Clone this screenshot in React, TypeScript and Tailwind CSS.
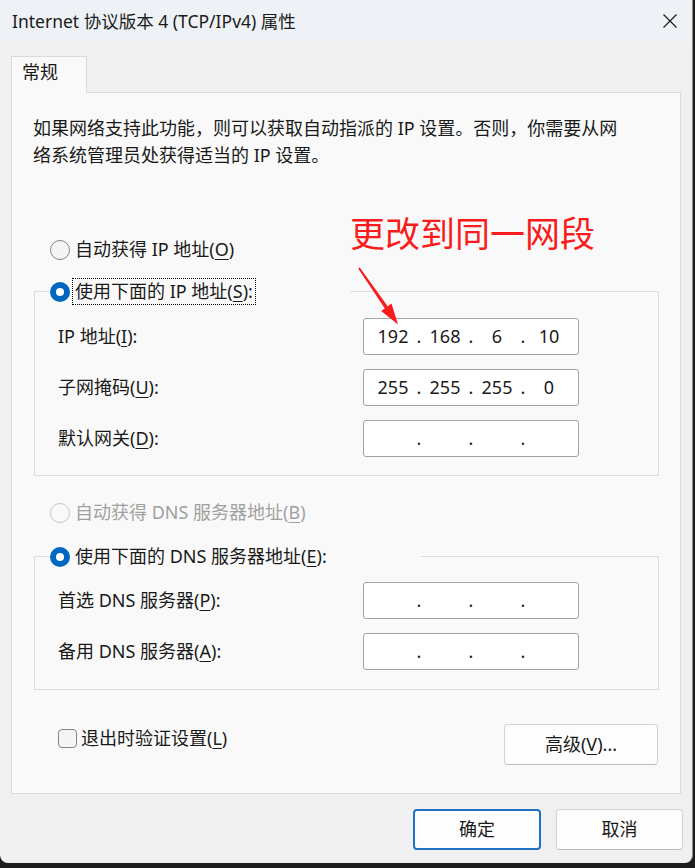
import { Fragment } from "react"

const font = "font-['Noto_Sans','Noto_Sans_CJK_SC',sans-serif]"

function Key({ k }: { k: string }) {
  return <span className="underline underline-offset-[3px] decoration-1">{k}</span>
}

function Radio({ checked, disabled }: { checked?: boolean; disabled?: boolean }) {
  if (checked) {
    return (
      <span className="flex h-[20px] w-[20px] shrink-0 items-center justify-center rounded-full bg-[#0067c0]">
        <span className="h-[8px] w-[8px] rounded-full bg-white" />
      </span>
    )
  }
  return (
    <span
      className={`h-[20px] w-[20px] shrink-0 rounded-full border ${
        disabled ? "border-[#c6c6c6] bg-[#f9f9f9]" : "border-[#858585] bg-[#f5f5f5]"
      }`}
    />
  )
}

function IpBox({ parts }: { parts: string[] }) {
  return (
    <div className="flex h-[37px] w-[216px] items-center rounded-[3px] border border-[#a3a3a3] bg-white pl-[7px] text-[18px] leading-[27px] text-[#1a1a1a]">
      {parts.map((p, i) => (
        <Fragment key={i}>
          {i > 0 && <span className="w-[8px] text-center">.</span>}
          <span className="w-[44px] text-center">{p}</span>
        </Fragment>
      ))}
    </div>
  )
}

function Field({ label, parts }: { label: React.ReactNode; parts: string[] }) {
  return (
    <div className="flex items-center px-[23px]">
      <span className="w-[305px] leading-[27px]">{label}</span>
      <IpBox parts={parts} />
    </div>
  )
}

function Button({ children, primary, className = "" }: { children: React.ReactNode; primary?: boolean; className?: string }) {
  return (
    <button
      className={`flex h-[41px] items-center justify-center rounded-[4px] bg-[#fdfdfd] text-[18px] text-[#1a1a1a] ${
        primary ? "border-2 border-[#1f6fc5]" : "border border-[#d2d2d2] border-b-[#bdbdbd]"
      } ${className}`}
    >
      {children}
    </button>
  )
}

export default function App() {
  const empty = ["", "", "", ""]

  return (
    <div className={`relative h-[868px] w-[695px] overflow-hidden bg-[#1d1d1d] ${font}`}>
      <div className="flex h-[863px] w-[693px] flex-col overflow-hidden rounded-b-[8px] border-r border-[#8d8d8d] bg-[#f0f0f0] text-[18px] text-[#1a1a1a]">
        {/* title bar */}
        <div className="flex h-[42px] shrink-0 items-center bg-[#eef2f6] pl-[12px] pr-[14px]">
          <span className="text-[17.5px] leading-[27px] text-[#1a1a1a]">Internet 协议版本 4 (TCP/IPv4) 属性</span>
          <svg className="ml-auto" width="16" height="16" viewBox="0 0 16 16">
            <path d="M1.5 1.5 L14.5 14.5 M14.5 1.5 L1.5 14.5" stroke="#1a1a1a" strokeWidth="1.2" fill="none" />
          </svg>
        </div>

        <div className="flex flex-col px-[11px] pt-[14px]">
          {/* tab */}
          <div className="relative z-10 h-[37px] w-[76px] border border-b-0 border-[#dadada] bg-[#f9f9f9] pl-[10px] pt-[2px] leading-[27px]">
            常规
          </div>

          {/* panel */}
          <div className="-mt-px flex h-[702px] w-[670px] flex-col border border-[#dadada] bg-[#f9f9f9]">
            <p className="mt-[22px] pl-[21px] leading-[27px] whitespace-nowrap">
              如果网络支持此功能，则可以获取自动指派的 IP 设置。否则，你需要从网
              <br />
              络系统管理员处获得适当的 IP 设置。
            </p>

            <div className="mt-[67px] ml-[38px] flex h-[27px] items-center">
              <Radio />
              <span className="ml-[5px] leading-[27px]">
                自动获得 IP 地址(<Key k="O" />)
              </span>
            </div>

            <fieldset className="mt-[15px] ml-[22px] w-[625px] border border-[#dcdcdc] pb-[18px]">
              <legend className="ml-[15px] w-[300px]">
                <div className="flex h-[27px] items-center">
                  <Radio checked />
                  <span className="ml-[2px] h-[27px] border border-dotted border-black pr-[2px] pl-[2px] leading-[25px]">
                    使用下面的 IP 地址(<Key k="S" />):
                  </span>
                </div>
              </legend>
              <div className="mt-[13px] flex flex-col gap-[14px]">
                <Field label={<>IP 地址(<Key k="I" />):</>} parts={["192", "168", "6", "10"]} />
                <Field label={<>子网掩码(<Key k="U" />):</>} parts={["255", "255", "255", "0"]} />
                <Field label={<>默认网关(<Key k="D" />):</>} parts={empty} />
              </div>
            </fieldset>

            <div className="mt-[23px] ml-[38px] flex h-[27px] items-center">
              <Radio disabled />
              <span className="ml-[5px] leading-[27px] text-[#a0a0a0]">
                自动获得 DNS 服务器地址(<Key k="B" />)
              </span>
            </div>

            <fieldset className="mt-[17px] ml-[22px] w-[625px] border border-[#dcdcdc] pb-[19px]">
              <legend className="ml-[15px] w-[371px]">
                <div className="flex h-[27px] items-center">
                  <Radio checked />
                  <span className="ml-[5px] leading-[27px]">
                    使用下面的 DNS 服务器地址(<Key k="E" />):
                  </span>
                </div>
              </legend>
              <div className="mt-[12px] flex flex-col gap-[14px]">
                <Field label={<>首选 DNS 服务器(<Key k="P" />):</>} parts={empty} />
                <Field label={<>备用 DNS 服务器(<Key k="A" />):</>} parts={empty} />
              </div>
            </fieldset>

            <div className="mt-[34px] flex items-start pr-[22px] pl-[46px]">
              <div className="mt-px flex h-[27px] items-center">
                <span className="h-[19px] w-[19px] rounded-[4px] border border-[#858585] bg-[#f5f5f5]" />
                <span className="ml-[4px] leading-[27px]">
                  退出时验证设置(<Key k="L" />)
                </span>
              </div>
              <Button className="ml-auto w-[154px]">
                高级(<Key k="V" />)...
              </Button>
            </div>
          </div>
        </div>

        <div className="mt-[15px] flex justify-end gap-[15px] pr-[9px]">
          <Button primary className="w-[128px]">确定</Button>
          <Button className="w-[127px]">取消</Button>
        </div>
      </div>

      {/* red annotation */}
      <div className="absolute top-[214px] left-[350px] text-[35px] leading-none whitespace-nowrap text-[#f81c1c] font-['Noto_Sans_CJK_SC',sans-serif]">
        更改到同一网段
      </div>
      <svg className="absolute top-[260px] left-[350px]" width="60" height="70" viewBox="0 0 60 70">
        <polygon points="9.8,7.4 8.2,8.6 35.0,48.8 37.8,46.6" fill="#f81c1c" />
        <polygon points="48,64.5 41.5,43.6 31.2,51.1" fill="#f81c1c" />
      </svg>
    </div>
  )
}
